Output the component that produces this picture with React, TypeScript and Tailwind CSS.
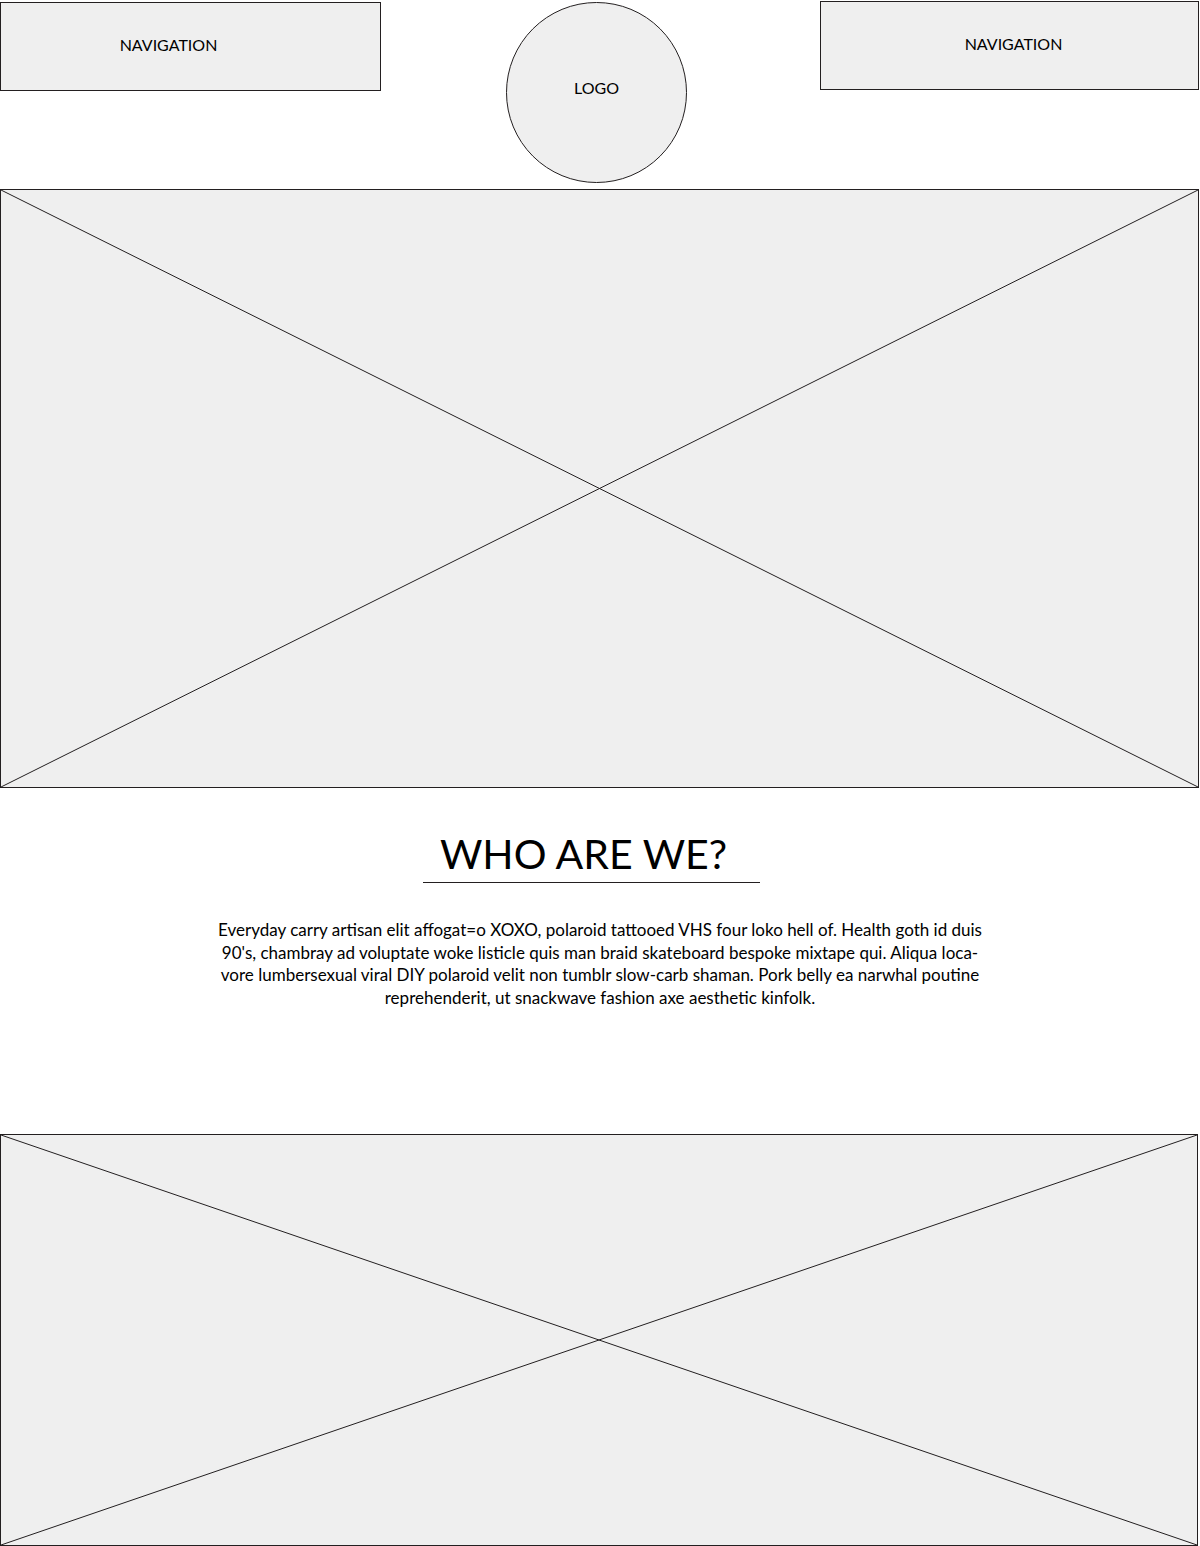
const FONT = "font-['Lato','Liberation_Sans',sans-serif]"

function Placeholder({ className }: { className: string }) {
  return (
    <div className={`relative border border-[#231f20] bg-[#efefef] ${className}`}>
      <svg
        className="absolute inset-0 h-full w-full"
        viewBox="0 0 100 100"
        preserveAspectRatio="none"
        aria-hidden="true"
      >
        <line x1="0" y1="0" x2="100" y2="100" stroke="#231f20" strokeWidth="1" vectorEffect="non-scaling-stroke" />
        <line x1="100" y1="0" x2="0" y2="100" stroke="#231f20" strokeWidth="1" vectorEffect="non-scaling-stroke" />
      </svg>
    </div>
  )
}

function NavBox({ className }: { className: string }) {
  return (
    <div
      className={`flex items-center justify-center border border-[#231f20] bg-[#efefef] pb-[3px] text-[16px] text-black ${className}`}
    >
      NAVIGATION
    </div>
  )
}

export default function App() {
  return (
    <div className={`w-[1200px] bg-white ${FONT}`}>
      {/* Header */}
      <header className="flex items-start">
        <NavBox className="mt-[2px] h-[89px] w-[381px] pr-[44px]" />
        <div className="mt-[2px] ml-[125px] flex h-[181px] w-[181px] items-center justify-center rounded-full border border-[#231f20] bg-[#efefef] pb-[10px] text-[16px] text-black">
          LOGO
        </div>
        <NavBox className="ml-[133px] mt-[1px] h-[89px] w-[379px] pl-[8px]" />
      </header>

      {/* Hero */}
      <Placeholder className="mt-[6px] h-[599px] w-[1199px]" />

      {/* About */}
      <section className="flex flex-col items-center pt-[38px]">
        <div className="ml-[-17px] w-[337px] border-b border-[#231f20] pb-[2px] pr-[16px] pt-[2px] text-center text-[41px] leading-[52px] text-black">
          WHO ARE WE?
        </div>
        <p className="mt-[36px] text-center text-[17px] leading-[22.5px] text-black">
          Everyday carry artisan elit affogat=o XOXO, polaroid tattooed VHS four loko hell of. Health goth id duis
          <br />
          90's, chambray ad voluptate woke listicle quis man braid skateboard bespoke mixtape qui. Aliqua loca-
          <br />
          vore lumbersexual viral DIY polaroid velit non tumblr slow-carb shaman. Pork belly ea narwhal poutine
          <br />
          reprehenderit, ut snackwave fashion axe aesthetic kinfolk.
        </p>
      </section>

      {/* Second image */}
      <Placeholder className="mt-[125px] h-[412px] w-[1198px]" />
    </div>
  )
}
